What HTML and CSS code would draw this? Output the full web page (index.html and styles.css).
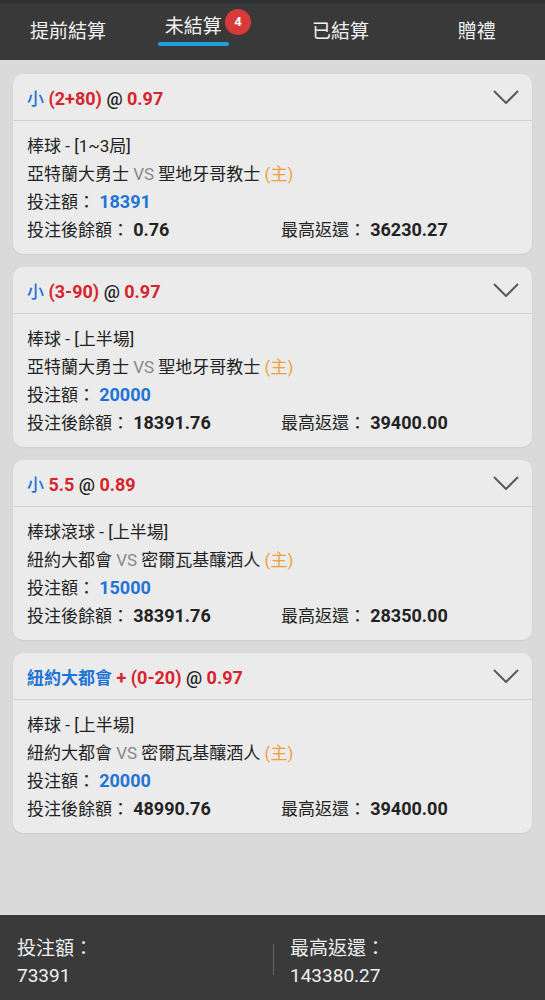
FILE: index.html
```html
<!DOCTYPE html>
<html lang="zh-Hant">
<head>
    <meta charset="UTF-8">
    <meta name="viewport" content="width=device-width, initial-scale=1.0">
    <title>未結算</title>
    <link rel="stylesheet" href="styles.css">
</head>
<body>
    <nav class="tabs">
        <a class="tab">提前結算</a>
        <a class="tab active"><span class="tab-label">未結算</span><span class="badge">4</span></a>
        <a class="tab">已結算</a>
        <a class="tab">贈禮</a>
    </nav>

    <main class="bets">
        <section class="bet">
            <div class="bet-head">
                <div class="bet-title"><span class="blue">小</span> <span class="red">(2+80)</span> <span class="at">@</span> <span class="red">0.97</span></div>
                <svg class="chevron" width="26" height="14" viewBox="0 0 26 14"><polyline points="1,1 13,13 25,1"/></svg>
            </div>
            <div class="bet-body">
                <div>棒球 - [1~3局]</div>
                <div>亞特蘭大勇士 <span class="vs">VS</span> 聖地牙哥教士 <span class="home">(主)</span></div>
                <div>投注額： <span class="num blue">18391</span></div>
                <div class="bet-row">
                    <div>投注後餘額： <span class="num">0.76</span></div>
                    <div>最高返還： <span class="num">36230.27</span></div>
                </div>
            </div>
        </section>

        <section class="bet">
            <div class="bet-head">
                <div class="bet-title"><span class="blue">小</span> <span class="red">(3-90)</span> <span class="at">@</span> <span class="red">0.97</span></div>
                <svg class="chevron" width="26" height="14" viewBox="0 0 26 14"><polyline points="1,1 13,13 25,1"/></svg>
            </div>
            <div class="bet-body">
                <div>棒球 - [上半場]</div>
                <div>亞特蘭大勇士 <span class="vs">VS</span> 聖地牙哥教士 <span class="home">(主)</span></div>
                <div>投注額： <span class="num blue">20000</span></div>
                <div class="bet-row">
                    <div>投注後餘額： <span class="num">18391.76</span></div>
                    <div>最高返還： <span class="num">39400.00</span></div>
                </div>
            </div>
        </section>

        <section class="bet">
            <div class="bet-head">
                <div class="bet-title"><span class="blue">小</span> <span class="red">5.5</span> <span class="at">@</span> <span class="red">0.89</span></div>
                <svg class="chevron" width="26" height="14" viewBox="0 0 26 14"><polyline points="1,1 13,13 25,1"/></svg>
            </div>
            <div class="bet-body">
                <div>棒球滾球 - [上半場]</div>
                <div>紐約大都會 <span class="vs">VS</span> 密爾瓦基釀酒人 <span class="home">(主)</span></div>
                <div>投注額： <span class="num blue">15000</span></div>
                <div class="bet-row">
                    <div>投注後餘額： <span class="num">38391.76</span></div>
                    <div>最高返還： <span class="num">28350.00</span></div>
                </div>
            </div>
        </section>

        <section class="bet">
            <div class="bet-head">
                <div class="bet-title"><span class="blue team">紐約大都會</span> <span class="red">+ (0-20)</span> <span class="at">@</span> <span class="red">0.97</span></div>
                <svg class="chevron" width="26" height="14" viewBox="0 0 26 14"><polyline points="1,1 13,13 25,1"/></svg>
            </div>
            <div class="bet-body">
                <div>棒球 - [上半場]</div>
                <div>紐約大都會 <span class="vs">VS</span> 密爾瓦基釀酒人 <span class="home">(主)</span></div>
                <div>投注額： <span class="num blue">20000</span></div>
                <div class="bet-row">
                    <div>投注後餘額： <span class="num">48990.76</span></div>
                    <div>最高返還： <span class="num">39400.00</span></div>
                </div>
            </div>
        </section>
    </main>

    <footer class="summary">
        <div class="sum-col">
            <div>投注額：</div>
            <div>73391</div>
        </div>
        <span class="sum-divider"></span>
        <div class="sum-col">
            <div>最高返還：</div>
            <div>143380.27</div>
        </div>
    </footer>
</body>
</html>
```

FILE: styles.css
```css
* {
    margin: 0;
    padding: 0;
    box-sizing: border-box;
}

body {
    font-family: 'Roboto', 'Noto Sans CJK TC', sans-serif;
    background-color: #dadada;
    color: #222;
    display: flex;
    flex-direction: column;
    min-height: 100vh;
}

/* top tabs */
.tabs {
    display: flex;
    height: 60px;
    background-color: #393939;
    border-top: 3px solid #2e3237;
}

.tab {
    flex: 1;
    display: flex;
    justify-content: center;
    align-items: flex-start;
    padding-top: 17px;
    color: #f2f2f2;
    font-size: 19px;
    line-height: 24px;
    text-decoration: none;
}

.tab.active {
    padding-top: 12px;
}

.tab-label {
    position: relative;
    padding: 0 7px;
}

.tab.active .tab-label::after {
    content: '';
    position: absolute;
    left: 0;
    right: 0;
    bottom: -7px;
    height: 4px;
    border-radius: 2px;
    background-color: #1fa0df;
}

.badge {
    width: 26px;
    height: 26px;
    margin: -6px 0 0 -4px;
    border-radius: 50%;
    background-color: #d83a3a;
    color: #fff;
    font-size: 13px;
    font-weight: bold;
    line-height: 26px;
    text-align: center;
}

/* bet cards */
.bets {
    flex: 1;
    display: flex;
    flex-direction: column;
    gap: 13px;
    padding: 14px 13px;
}

.bet {
    background-color: #ebebeb;
    border-radius: 10px;
    box-shadow: 0 1px 2px rgba(0, 0, 0, 0.06);
}

.bet-head {
    display: flex;
    align-items: center;
    justify-content: space-between;
    height: 47px;
    padding: 0 13px 0 14px;
    border-bottom: 1px solid #d3d3d3;
}

.bet-title {
    font-size: 18px;
    font-weight: bold;
}

.bet-title .blue {
    font-size: 17px;
    font-weight: 500;
}

.bet-title .team {
    font-weight: bold;
}

.bet-title .at {
    font-weight: 500;
}

.chevron polyline {
    fill: none;
    stroke: #5a5a5a;
    stroke-width: 2;
}

.bet-body {
    padding: 11px 14px 10px;
    font-size: 17px;
    line-height: 28px;
}

.bet-row {
    display: grid;
    grid-template-columns: 254px 1fr;
}

.num {
    font-size: 18px;
    font-weight: bold;
}

.blue {
    color: #1f74d6;
}

.red {
    color: #d8232c;
}

.vs {
    color: #888;
}

.home {
    color: #f0a03a;
}

/* totals */
.summary {
    display: flex;
    align-items: flex-start;
    height: 85px;
    padding-top: 20px;
    background-color: #3a3a3a;
    color: #f0f0f0;
    font-size: 19px;
    line-height: 27px;
}

.sum-col {
    padding-left: 17px;
}

.sum-col:first-child {
    width: 273px;
}

.sum-divider {
    width: 1px;
    height: 31px;
    margin-top: 9px;
    background-color: #666;
}

.sum-col:last-child {
    padding-left: 16px;
}
```
